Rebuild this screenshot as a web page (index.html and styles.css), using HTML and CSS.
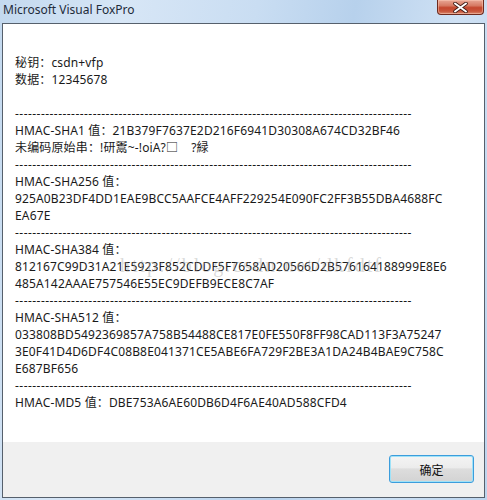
FILE: index.html
```html
<!DOCTYPE html>
<html lang="zh-CN">
<head>
<meta charset="utf-8">
<title>Microsoft Visual FoxPro</title>
<link rel="stylesheet" href="styles.css">
</head>
<body>
<div class="window">
  <div class="titlebar">
    <span class="title">Microsoft Visual FoxPro</span>
    <button class="close" aria-label="关闭">
      <svg width="15" height="11" viewBox="0 0 15 11">
        <path d="M2 1.5 L13 9.5 M13 1.5 L2 9.5" stroke="#3c1a14" stroke-width="3.6" stroke-linecap="round"/>
        <path d="M2 1.5 L13 9.5 M13 1.5 L2 9.5" stroke="#ffffff" stroke-width="2" stroke-linecap="round"/>
      </svg>
    </button>
  </div>
  <div class="client">
    <div class="message">
      <div class="line">秘钥：csdn+vfp</div>
      <div class="line">数据：12345678</div>
      <div class="line">&nbsp;</div>
      <div class="line rule">--------------------------------------------------------------------------------------------</div>
      <div class="line">HMAC-SHA1 值：21B379F7637E2D216F6941D30308A674CD32BF46</div>
      <div class="line">未编码原始串：!研鬻~-!oiA?□&nbsp;&nbsp;&nbsp;&nbsp;?緑</div>
      <div class="line rule">--------------------------------------------------------------------------------------------</div>
      <div class="line">HMAC-SHA256 值：</div>
      <div class="line">925A0B23DF4DD1EAE9BCC5AAFCE4AFF229254E090FC2FF3B55DBA4688FC</div>
      <div class="line">EA67E</div>
      <div class="line rule">--------------------------------------------------------------------------------------------</div>
      <div class="line">HMAC-SHA384 值：</div>
      <div class="line">812167C99D31A21E5923F852CDDF5F7658AD20566D2B576164188999E8E6</div>
      <div class="line">485A142AAAE757546E55EC9DEFB9ECE8C7AF</div>
      <div class="line rule">--------------------------------------------------------------------------------------------</div>
      <div class="line">HMAC-SHA512 值：</div>
      <div class="line">033808BD5492369857A758B54488CE817E0FE550F8FF98CAD113F3A75247</div>
      <div class="line">3E0F41D4D6DF4C08B8E041371CE5ABE6FA729F2BE3A1DA24B4BAE9C758C</div>
      <div class="line">E687BF656</div>
      <div class="line rule">--------------------------------------------------------------------------------------------</div>
      <div class="line">HMAC-MD5 值：DBE753A6AE60DB6D4F6AE40AD588CFD4</div>
      <div class="watermark">http://blog.csdn.net/dkfdtf</div>
    </div>
    <div class="footer">
      <button class="ok">确定</button>
    </div>
  </div>
</div>
</body>
</html>
```

FILE: styles.css
```css
html, body {
  margin: 0;
  padding: 0;
}

body {
  width: 487px;
  height: 500px;
  overflow: hidden;
  font-family: "Noto Sans", "Noto Sans CJK SC", sans-serif;
}

.window {
  width: 487px;
  height: 500px;
  box-sizing: border-box;
  padding: 0 2px 2px 2px;
  display: flex;
  flex-direction: column;
  background:
    linear-gradient(100deg, #c3d9ef 0%, #d7e6f6 22%, #c9ddf2 45%, #b7d1ec 62%, #cfe1f4 80%, #bdd5ee 100%);
}

.titlebar {
  height: 23px;
  flex: none;
  display: flex;
  justify-content: space-between;
  align-items: flex-start;
}

.title {
  margin: 2px 0 0 1px;
  font-size: 12px;
  line-height: 16px;
  color: #1e2b3a;
}

.close {
  width: 47px;
  height: 15px;
  margin-right: 1px;
  padding: 0;
  border: 1px solid #6e2a1e;
  border-top: none;
  border-radius: 0 0 4px 4px;
  background: linear-gradient(#e8a795 0%, #d67a63 40%, #c4472e 55%, #c8553b 80%, #d98a6f 100%);
  box-shadow: inset 0 0 0 1px rgba(255, 210, 190, 0.45);
  display: flex;
  align-items: center;
  justify-content: center;
}

.close svg {
  display: block;
}

.client {
  flex: 1;
  display: flex;
  flex-direction: column;
  border: 1px solid #56606c;
  background: #ffffff;
}

.message {
  position: relative;
  flex: 1;
  padding: 30px 0 0 12px;
  font-size: 12px;
  line-height: 17px;
  letter-spacing: 0.15px;
  color: #1a1a1a;
}

.line {
  white-space: nowrap;
}

.rule {
  letter-spacing: 0.45px;
}

.watermark {
  position: absolute;
  left: 117px;
  top: 233px;
  font-family: "Liberation Serif", serif;
  font-size: 20px;
  letter-spacing: 2px;
  color: rgba(160, 160, 160, 0.4);
  pointer-events: none;
}

.footer {
  height: 55px;
  flex: none;
  background: #f0f0f0;
  display: flex;
  justify-content: flex-end;
  align-items: flex-start;
  padding: 13px 10px 0 0;
  box-sizing: border-box;
}

.ok {
  width: 85px;
  height: 28px;
  border: 1px solid #3c9ddc;
  border-radius: 3px;
  background: linear-gradient(#f4f4f4 0%, #ececec 45%, #dddddd 50%, #d3d3d3 100%);
  box-shadow: inset 0 0 0 1px #9fe2f8;
  font-family: "Noto Sans CJK SC", sans-serif;
  font-size: 12px;
  color: #111;
  padding: 0;
}
```
